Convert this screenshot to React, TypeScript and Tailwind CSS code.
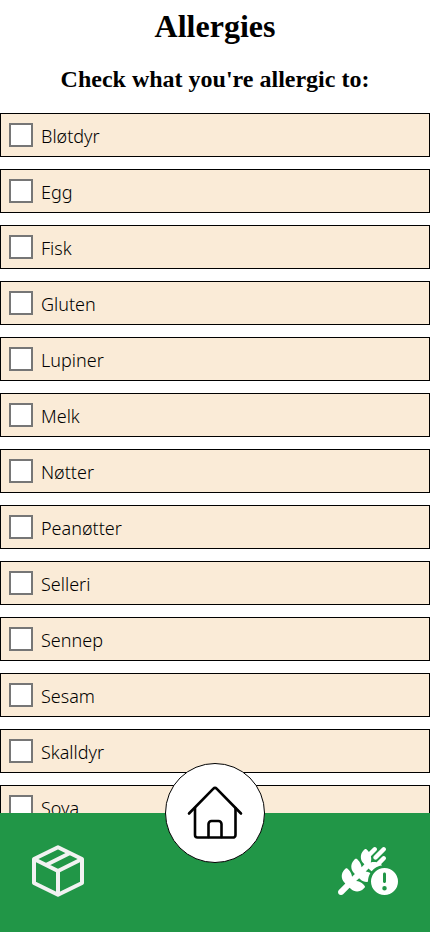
import { FaWheatAwnCircleExclamation } from "react-icons/fa6";

const allergens = [
  "Bløtdyr",
  "Egg",
  "Fisk",
  "Gluten",
  "Lupiner",
  "Melk",
  "Nøtter",
  "Peanøtter",
  "Selleri",
  "Sennep",
  "Sesam",
  "Skalldyr",
  "Soya",
];

function AllergenRow({ name }: { name: string }) {
  return (
    <li className="flex h-11 items-center gap-2 border border-black bg-[#faebd7] px-2">
      <input
        id={name}
        type="checkbox"
        className="size-6 shrink-0 appearance-none border-2 border-[#767676] bg-white checked:bg-[#219647]"
      />
      <label htmlFor={name} className="flex-1 pt-0.5 text-lg leading-6 font-light">
        {name}
      </label>
    </li>
  );
}

function BoxIcon() {
  return (
    <svg viewBox="0 0 52 52" className="size-13" fill="none" stroke="#f2f2f2" strokeWidth="4" strokeLinejoin="round">
      <path d="M26 2.2 50 14v24L26 49.800 2 38V14Z" />
      <path d="M2 14l24 12 24-12M26 26v24M38 8 14 20" />
    </svg>
  );
}

function HomeIcon() {
  return (
    <svg viewBox="0 0 56 54" className="h-[54px] w-14" fill="none" stroke="#000" strokeWidth="2.600" strokeLinecap="round" strokeLinejoin="round">
      <path d="M2 27.500 26.400 2.600a2.200 2.200 0 0 1 3.200 0L54 27.500" />
      <path d="M8 22v27a2.500 2.500 0 0 0 2.500 2.500h35A2.500 2.500 0 0 0 48.500 49V22" />
      <path d="M21.500 51V38a3 3 0 0 1 3-3h7a3 3 0 0 1 3 3v13" />
    </svg>
  );
}

function BottomBar() {
  return (
    <nav className="fixed inset-x-0 bottom-0 flex h-[119px] items-center justify-between bg-[#219647] px-8 pb-1">
      <a href="#products" aria-label="Products">
        <BoxIcon />
      </a>
      <a
        href="#home"
        aria-label="Home"
        className="absolute -top-[50px] left-1/2 flex size-[100px] -translate-x-1/2 items-center justify-center rounded-full border border-black bg-white"
      >
        <HomeIcon />
      </a>
      <a href="#allergies" aria-label="Allergies">
        <FaWheatAwnCircleExclamation className="h-12 w-[60px] text-white" />
      </a>
    </nav>
  );
}

export default function App() {
  return (
    <div className="bg-white font-['Noto_Sans',sans-serif] text-black">
      <main className="pb-24">
        <header className="flex flex-col gap-[21px] pt-2 pb-5 text-center font-['Liberation_Serif',serif] font-bold">
          <h1 className="text-[32px] leading-9">Allergies</h1>
          <h2 className="text-2xl leading-7">Check what you&apos;re allergic to:</h2>
        </header>
        <ul className="flex flex-col gap-3">
          {allergens.map((name) => (
            <AllergenRow key={name} name={name} />
          ))}
        </ul>
      </main>
      <BottomBar />
    </div>
  );
}
